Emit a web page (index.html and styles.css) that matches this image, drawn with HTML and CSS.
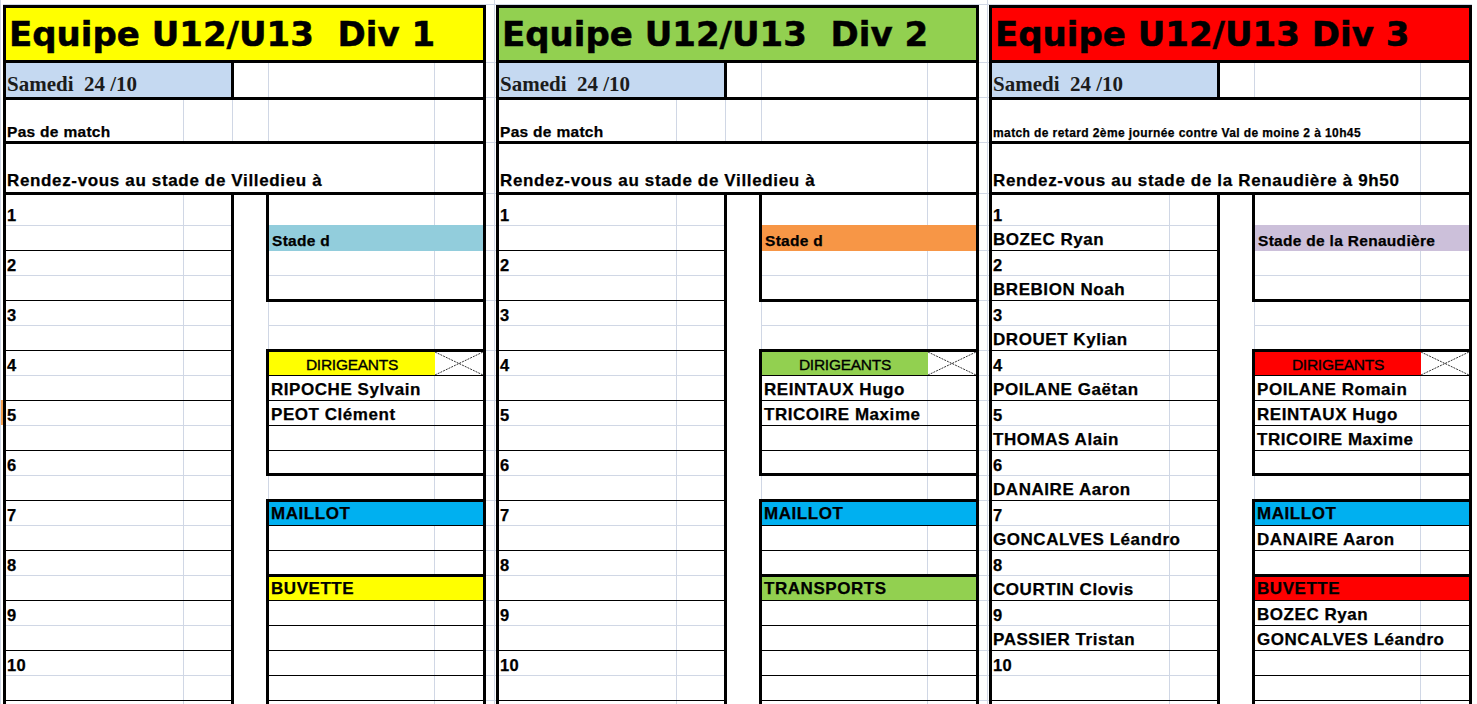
FILE: index.html
```html
<!DOCTYPE html>
<html lang="fr">
<head>
<meta charset="utf-8">
<title>Equipes U12/U13</title>
<link rel="stylesheet" href="styles.css">
</head>
<body>
<div class="sheet">
  <div class="edge"><div class="edge-mark"></div></div>

  <!-- ============ DIV 1 ============ -->
  <section class="block b1">
    <div class="strip"></div>
    <div class="frame">
      <h1 class="title">Equipe U12/U13  Div 1</h1>
      <div class="row date-row"><div class="date">Samedi  24 /10</div><div class="dc"></div><div class="dd"></div><div class="de"></div></div>
      <div class="row info-row"><div class="ia"><span class="small">Pas de match</span></div><div class="ib"></div><div class="ic"></div><div class="id"></div><div class="ie"></div></div>
      <div class="row rdv-row"><div class="ra"><span class="rdv">Rendez-vous au stade de Villedieu à</span></div><div class="re"></div></div>
      <div class="list">
        <div class="players">
          <div class="p first"><div class="a"><span class="num">1</span></div><div class="b"></div></div>
          <div class="p k"><div class="a"></div><div class="b"></div></div>
          <div class="p"><div class="a"><span class="num">2</span></div><div class="b"></div></div>
          <div class="p k"><div class="a"></div><div class="b"></div></div>
          <div class="p"><div class="a"><span class="num">3</span></div><div class="b"></div></div>
          <div class="p k"><div class="a"></div><div class="b"></div></div>
          <div class="p"><div class="a"><span class="num">4</span></div><div class="b"></div></div>
          <div class="p k"><div class="a"></div><div class="b"></div></div>
          <div class="p"><div class="a"><span class="num">5</span></div><div class="b"></div></div>
          <div class="p k"><div class="a"></div><div class="b"></div></div>
          <div class="p"><div class="a"><span class="num">6</span></div><div class="b"></div></div>
          <div class="p k"><div class="a"></div><div class="b"></div></div>
          <div class="p"><div class="a"><span class="num">7</span></div><div class="b"></div></div>
          <div class="p k"><div class="a"></div><div class="b"></div></div>
          <div class="p"><div class="a"><span class="num">8</span></div><div class="b"></div></div>
          <div class="p k"><div class="a"></div><div class="b"></div></div>
          <div class="p"><div class="a"><span class="num">9</span></div><div class="b"></div></div>
          <div class="p k"><div class="a"></div><div class="b"></div></div>
          <div class="p"><div class="a"><span class="num">10</span></div><div class="b"></div></div>
          <div class="p k"><div class="a"></div><div class="b"></div></div>
          <div class="p"><div class="a"></div><div class="b"></div></div>
        </div>
        <div class="gap"></div>
        <div class="side">
          <div class="box">
            <div class="r h30"><div class="d"></div><div class="e"></div></div>
            <div class="r fill stade"><span class="small">Stade d</span></div>
            <div class="r grid"><div class="d"></div><div class="e"></div></div>
            <div class="r last"><div class="d"></div><div class="e"></div></div>
          </div>
          <div class="gr g24"><div class="d"></div><div class="e"></div></div>
          <div class="gr g23"><div class="d"></div><div class="e"></div></div>
          <div class="box t">
            <div class="r hdr"><div class="d lead"><span class="lead-t">DIRIGEANTS</span></div><div class="e"><svg class="x" viewBox="0 0 48 23" preserveAspectRatio="none"><line x1="0" y1="0" x2="48" y2="23"/><line x1="0" y1="23" x2="48" y2="0"/></svg></div></div>
            <div class="r"><div class="d"><span class="nm">RIPOCHE Sylvain</span></div><div class="e"></div></div>
            <div class="r"><div class="d"><span class="nm">PEOT Clément</span></div><div class="e"></div></div>
            <div class="r"><div class="d"></div><div class="e"></div></div>
            <div class="r last22"><div class="d"></div><div class="e"></div></div>
          </div>
          <div class="gr g23"><div class="d"></div><div class="e"></div></div>
          <div class="box t open">
            <div class="r fill-hdr maillot"><span class="nm">MAILLOT</span></div>
            <div class="r"><div class="d"></div><div class="e"></div></div>
            <div class="r last"><div class="d"></div><div class="e"></div></div>
            <div class="r fill-hdr second main"><span class="nm">BUVETTE</span></div>
            <div class="r"><div class="d"></div><div class="e"></div></div>
            <div class="r"><div class="d"></div><div class="e"></div></div>
            <div class="r"><div class="d"></div><div class="e"></div></div>
            <div class="r"><div class="d"></div><div class="e"></div></div>
            <div class="r"><div class="d"></div><div class="e"></div></div>
          </div>
        </div>
      </div>
    </div>
  </section>

  <div class="sep"><div class="s s0"></div><div class="s s1"></div><div class="s s2"></div><div class="s s3"></div><div class="s s4"></div><div class="s s5"></div><div class="s"></div><div class="s"></div><div class="s"></div><div class="s"></div><div class="s"></div><div class="s"></div><div class="s"></div><div class="s"></div><div class="s"></div><div class="s"></div><div class="s"></div><div class="s"></div><div class="s"></div><div class="s"></div><div class="s"></div><div class="s"></div><div class="s"></div><div class="s"></div><div class="s"></div><div class="s"></div></div>

  <!-- ============ DIV 2 ============ -->
  <section class="block b2">
    <div class="strip"></div>
    <div class="frame">
      <h1 class="title">Equipe U12/U13  Div 2</h1>
      <div class="row date-row"><div class="date">Samedi  24 /10</div><div class="dc"></div><div class="dd"></div><div class="de"></div></div>
      <div class="row info-row"><div class="ia"><span class="small">Pas de match</span></div><div class="ib"></div><div class="ic"></div><div class="id"></div><div class="ie"></div></div>
      <div class="row rdv-row"><div class="ra"><span class="rdv">Rendez-vous au stade de Villedieu à</span></div><div class="re"></div></div>
      <div class="list">
        <div class="players">
          <div class="p first"><div class="a"><span class="num">1</span></div><div class="b"></div></div>
          <div class="p k"><div class="a"></div><div class="b"></div></div>
          <div class="p"><div class="a"><span class="num">2</span></div><div class="b"></div></div>
          <div class="p k"><div class="a"></div><div class="b"></div></div>
          <div class="p"><div class="a"><span class="num">3</span></div><div class="b"></div></div>
          <div class="p k"><div class="a"></div><div class="b"></div></div>
          <div class="p"><div class="a"><span class="num">4</span></div><div class="b"></div></div>
          <div class="p k"><div class="a"></div><div class="b"></div></div>
          <div class="p"><div class="a"><span class="num">5</span></div><div class="b"></div></div>
          <div class="p k"><div class="a"></div><div class="b"></div></div>
          <div class="p"><div class="a"><span class="num">6</span></div><div class="b"></div></div>
          <div class="p k"><div class="a"></div><div class="b"></div></div>
          <div class="p"><div class="a"><span class="num">7</span></div><div class="b"></div></div>
          <div class="p k"><div class="a"></div><div class="b"></div></div>
          <div class="p"><div class="a"><span class="num">8</span></div><div class="b"></div></div>
          <div class="p k"><div class="a"></div><div class="b"></div></div>
          <div class="p"><div class="a"><span class="num">9</span></div><div class="b"></div></div>
          <div class="p k"><div class="a"></div><div class="b"></div></div>
          <div class="p"><div class="a"><span class="num">10</span></div><div class="b"></div></div>
          <div class="p k"><div class="a"></div><div class="b"></div></div>
          <div class="p"><div class="a"></div><div class="b"></div></div>
        </div>
        <div class="gap"></div>
        <div class="side">
          <div class="box">
            <div class="r h30"><div class="d"></div><div class="e"></div></div>
            <div class="r fill stade"><span class="small">Stade d</span></div>
            <div class="r grid"><div class="d"></div><div class="e"></div></div>
            <div class="r last"><div class="d"></div><div class="e"></div></div>
          </div>
          <div class="gr g24"><div class="d"></div><div class="e"></div></div>
          <div class="gr g23"><div class="d"></div><div class="e"></div></div>
          <div class="box t">
            <div class="r hdr"><div class="d lead"><span class="lead-t">DIRIGEANTS</span></div><div class="e"><svg class="x" viewBox="0 0 48 23" preserveAspectRatio="none"><line x1="0" y1="0" x2="48" y2="23"/><line x1="0" y1="23" x2="48" y2="0"/></svg></div></div>
            <div class="r"><div class="d"><span class="nm">REINTAUX Hugo</span></div><div class="e"></div></div>
            <div class="r"><div class="d"><span class="nm">TRICOIRE Maxime</span></div><div class="e"></div></div>
            <div class="r"><div class="d"></div><div class="e"></div></div>
            <div class="r last22"><div class="d"></div><div class="e"></div></div>
          </div>
          <div class="gr g23"><div class="d"></div><div class="e"></div></div>
          <div class="box t open">
            <div class="r fill-hdr maillot"><span class="nm">MAILLOT</span></div>
            <div class="r"><div class="d"></div><div class="e"></div></div>
            <div class="r last"><div class="d"></div><div class="e"></div></div>
            <div class="r fill-hdr second main"><span class="nm">TRANSPORTS</span></div>
            <div class="r"><div class="d"></div><div class="e"></div></div>
            <div class="r"><div class="d"></div><div class="e"></div></div>
            <div class="r"><div class="d"></div><div class="e"></div></div>
            <div class="r"><div class="d"></div><div class="e"></div></div>
            <div class="r"><div class="d"></div><div class="e"></div></div>
          </div>
        </div>
      </div>
    </div>
  </section>

  <div class="sep"><div class="s s0"></div><div class="s s1"></div><div class="s s2"></div><div class="s s3"></div><div class="s s4"></div><div class="s s5"></div><div class="s"></div><div class="s"></div><div class="s"></div><div class="s"></div><div class="s"></div><div class="s"></div><div class="s"></div><div class="s"></div><div class="s"></div><div class="s"></div><div class="s"></div><div class="s"></div><div class="s"></div><div class="s"></div><div class="s"></div><div class="s"></div><div class="s"></div><div class="s"></div><div class="s"></div><div class="s"></div></div>

  <!-- ============ DIV 3 ============ -->
  <section class="block b3">
    <div class="strip"></div>
    <div class="frame">
      <h1 class="title">Equipe U12/U13 Div 3</h1>
      <div class="row date-row"><div class="date">Samedi  24 /10</div><div class="dc"></div><div class="dd"></div><div class="de"></div></div>
      <div class="row info-row"><div class="ra"><span class="tiny">match de retard 2ème journée contre Val de moine 2 à 10h45</span></div><div class="re"></div></div>
      <div class="row rdv-row"><div class="ra"><span class="rdv">Rendez-vous au stade de la Renaudière à 9h50</span></div><div class="re"></div></div>
      <div class="list">
        <div class="players">
          <div class="p first"><div class="a"><span class="num">1</span></div><div class="b"></div></div>
          <div class="p k"><div class="a"><span class="nm">BOZEC Ryan</span></div><div class="b"></div></div>
          <div class="p"><div class="a"><span class="num">2</span></div><div class="b"></div></div>
          <div class="p k"><div class="a"><span class="nm">BREBION Noah</span></div><div class="b"></div></div>
          <div class="p"><div class="a"><span class="num">3</span></div><div class="b"></div></div>
          <div class="p k"><div class="a"><span class="nm">DROUET Kylian</span></div><div class="b"></div></div>
          <div class="p"><div class="a"><span class="num">4</span></div><div class="b"></div></div>
          <div class="p k"><div class="a"><span class="nm">POILANE Gaëtan</span></div><div class="b"></div></div>
          <div class="p"><div class="a"><span class="num">5</span></div><div class="b"></div></div>
          <div class="p k"><div class="a"><span class="nm">THOMAS Alain</span></div><div class="b"></div></div>
          <div class="p"><div class="a"><span class="num">6</span></div><div class="b"></div></div>
          <div class="p k"><div class="a"><span class="nm">DANAIRE Aaron</span></div><div class="b"></div></div>
          <div class="p"><div class="a"><span class="num">7</span></div><div class="b"></div></div>
          <div class="p k"><div class="a"><span class="nm">GONCALVES Léandro</span></div><div class="b"></div></div>
          <div class="p"><div class="a"><span class="num">8</span></div><div class="b"></div></div>
          <div class="p k"><div class="a"><span class="nm">COURTIN Clovis</span></div><div class="b"></div></div>
          <div class="p"><div class="a"><span class="num">9</span></div><div class="b"></div></div>
          <div class="p k"><div class="a"><span class="nm">PASSIER Tristan</span></div><div class="b"></div></div>
          <div class="p"><div class="a"><span class="num">10</span></div><div class="b"></div></div>
          <div class="p k"><div class="a"></div><div class="b"></div></div>
          <div class="p"><div class="a"></div><div class="b"></div></div>
        </div>
        <div class="gap"></div>
        <div class="side">
          <div class="box">
            <div class="r h30"><div class="d"></div><div class="e"></div></div>
            <div class="r fill stade"><span class="small">Stade de la Renaudière</span></div>
            <div class="r grid"><div class="d"></div><div class="e"></div></div>
            <div class="r last"><div class="d"></div><div class="e"></div></div>
          </div>
          <div class="gr g24"><div class="d"></div><div class="e"></div></div>
          <div class="gr g23"><div class="d"></div><div class="e"></div></div>
          <div class="box t">
            <div class="r hdr"><div class="d lead"><span class="lead-t">DIRIGEANTS</span></div><div class="e"><svg class="x" viewBox="0 0 48 23" preserveAspectRatio="none"><line x1="0" y1="0" x2="48" y2="23"/><line x1="0" y1="23" x2="48" y2="0"/></svg></div></div>
            <div class="r"><div class="d"><span class="nm">POILANE Romain</span></div><div class="e"></div></div>
            <div class="r"><div class="d"><span class="nm">REINTAUX Hugo</span></div><div class="e"></div></div>
            <div class="r"><div class="d"><span class="nm">TRICOIRE Maxime</span></div><div class="e"></div></div>
            <div class="r last22"><div class="d"></div><div class="e"></div></div>
          </div>
          <div class="gr g23"><div class="d"></div><div class="e"></div></div>
          <div class="box t open">
            <div class="r fill-hdr maillot"><span class="nm">MAILLOT</span></div>
            <div class="r"><div class="d"><span class="nm">DANAIRE Aaron</span></div><div class="e"></div></div>
            <div class="r last"><div class="d"></div><div class="e"></div></div>
            <div class="r fill-hdr second main"><span class="nm">BUVETTE</span></div>
            <div class="r"><div class="d"><span class="nm">BOZEC Ryan</span></div><div class="e"></div></div>
            <div class="r"><div class="d"><span class="nm">GONCALVES Léandro</span></div><div class="e"></div></div>
            <div class="r"><div class="d"></div><div class="e"></div></div>
            <div class="r"><div class="d"></div><div class="e"></div></div>
            <div class="r"><div class="d"></div><div class="e"></div></div>
          </div>
        </div>
      </div>
    </div>
  </section>
  <div class="tail"></div>
</div>
</body>
</html>
```

FILE: styles.css
```css
* { box-sizing: border-box; margin: 0; padding: 0; }

html, body {
  width: 1477px;
  height: 704px;
  overflow: hidden;
  background: #fff;
}

body {
  font-family: "Liberation Sans", Arial, sans-serif;
  font-weight: 700;
  color: #000;
  --grid: #d0d7e5;
}

.sheet {
  display: flex;
  align-items: flex-start;
  width: 1477px;
  height: 704px;
}

/* left window edge */
.edge {
  width: 3px;
  height: 704px;
  flex: none;
  border-left: 1px solid var(--grid);
  padding-top: 400px;
}
.edge-mark { width: 2px; height: 25px; background: #f5a252; }

/* separator columns between the blocks */
.sep {
  width: 10px;
  height: 704px;
  flex: none;
  background: linear-gradient(var(--grid), var(--grid)) no-repeat 8px 0 / 1px 100%;
}
.sep .s { height: 25px; border-bottom: 1px solid var(--grid); }
.sep .s0 { height: 5px; }
.sep .s1 { height: 58px; }
.sep .s2 { height: 35px; }
.sep .s3 { height: 45px; }
.sep .s4 { height: 51px; }
.sep .s5 { height: 32px; }

.tail { flex: 1; height: 704px; }

/* colour themes */
.b1 { --main: #ffff00; --stade: #92cddc; }
.b2 { --main: #92d050; --stade: #f79646; }
.b3 { --main: #ff0000; --stade: #ccc0da; }

.block { width: 483px; flex: none; }
.strip { height: 5px; border-bottom: 1px solid var(--grid); }
.frame {
  border: 3px solid #000;
  border-bottom: 0;
  height: 699px;
  overflow: hidden;
}

.title {
  height: 55px;
  border-bottom: 3px solid #000;
  background: var(--main);
  font: 700 34px/52px "DejaVu Sans", "Liberation Sans", sans-serif;
  padding-left: 3px;
  white-space: pre;
  color: #000;
  -webkit-text-stroke: 0.5px #000;
}

.row { display: flex; }

/* Samedi row */
.date-row { height: 37px; border-bottom: 3px solid #000; }
.date {
  width: 228px;
  background: #c5d9f1;
  border-right: 3px solid #000;
  font: 700 21px "Liberation Serif", "Times New Roman", serif;
  color: #1c1c1c;
  white-space: pre;
  display: flex;
  align-items: flex-end;
  padding-left: 1px;
}
.dc { width: 35px; border-right: 1px solid var(--grid); }
.dd { width: 166px; border-right: 1px solid var(--grid); }
.de { width: 48px; }

/* info row */
.info-row { height: 44px; border-bottom: 3px solid #000; }
.ia { width: 178px; border-right: 1px solid var(--grid); display: flex; align-items: flex-end; padding-left: 1px; white-space: nowrap; }
.ib { width: 49px; border-right: 1px solid var(--grid); }
.ic { width: 36px; border-right: 1px solid var(--grid); }
.id { width: 166px; border-right: 1px solid var(--grid); }
.ie { width: 48px; }

/* rendez-vous row */
.rdv-row { height: 51px; border-bottom: 3px solid #000; }
.ra { width: 429px; border-right: 1px solid var(--grid); display: flex; align-items: flex-end; padding-left: 1px; white-space: nowrap; }
.re { width: 48px; }
.rdv-row .ra { padding-bottom: 1px; }

/* text sizes */
.small, .tiny, .rdv, .nm, .num { -webkit-text-stroke: 0.25px #000; }
.small { font-size: 15.5px; letter-spacing: 0.3px; }
.tiny { font-size: 12px; letter-spacing: 0.4px; padding-bottom: 1px; }
.rdv { font-size: 17px; letter-spacing: 0.65px; }
.nm { font-size: 17px; letter-spacing: 0.55px; }
.num { font-size: 16.5px; letter-spacing: 0.3px; }

/* list area */
.list { display: flex; align-items: flex-start; }

.players { width: 228px; border-right: 3px solid #000; flex: none; }
.p { display: flex; height: 25px; border-bottom: 1px solid var(--grid); }
.p.first { height: 31px; }
.p.k { border-bottom-color: #000; }
.p .a {
  width: 178px;
  border-right: 1px solid var(--grid);
  display: flex;
  align-items: flex-end;
  padding-left: 1px;
  white-space: nowrap;
}
.p .b { width: 47px; }

.gap { width: 32px; flex: none; }

.side { width: 217px; flex: none; }

.box { border-left: 3px solid #000; border-bottom: 3px solid #000; }
.box.t { border-top: 3px solid #000; }
.box.open { border-bottom: 0; }

.r { display: flex; height: 25px; border-bottom: 1px solid #000; }
.r .d {
  width: 166px;
  border-right: 1px solid var(--grid);
  display: flex;
  align-items: flex-end;
  padding-left: 2px;
  white-space: nowrap;
}
.r .e { width: 48px; }

.r.h30 { height: 30px; border-bottom: 0; }
.r.grid { border-bottom-color: var(--grid); }
.r.last { height: 23px; border-bottom: 0; }
.r.last22 { height: 22px; border-bottom: 0; }

.r.fill {
  height: 26px;
  border-bottom: 0;
  align-items: flex-end;
  padding: 0 0 1px 3px;
  white-space: nowrap;
}
.r.stade { background: var(--stade); }

.r.fill-hdr {
  height: 24px;
  align-items: flex-end;
  padding: 0 0 1px 2px;
  white-space: nowrap;
}
.r.maillot { background: #00b0f0; }
.r.main { background: var(--main); }
.r.second { height: 27px; border-top: 3px solid #000; }

.r.hdr { height: 24px; }
.r.hdr .d.lead {
  background: var(--main);
  border-right: 0;
  justify-content: center;
  padding: 0 0 1px;
}
.lead-t {
  font-weight: 400;
  font-size: 15.5px;
  letter-spacing: -0.25px;
  -webkit-text-stroke: 0.35px #000;
}
.x { display: block; width: 48px; height: 23px; }
.x line { stroke: #000; stroke-width: 0.8; stroke-dasharray: 2 1; }

.gr {
  display: flex;
  margin-left: 2px;
  border-left: 1px solid var(--grid);
}
.gr .d { width: 166px; border-right: 1px solid var(--grid); }
.gr .e { width: 48px; }
.gr.g24 { height: 24px; border-bottom: 1px solid var(--grid); }
.gr.g23 { height: 23px; }
```
